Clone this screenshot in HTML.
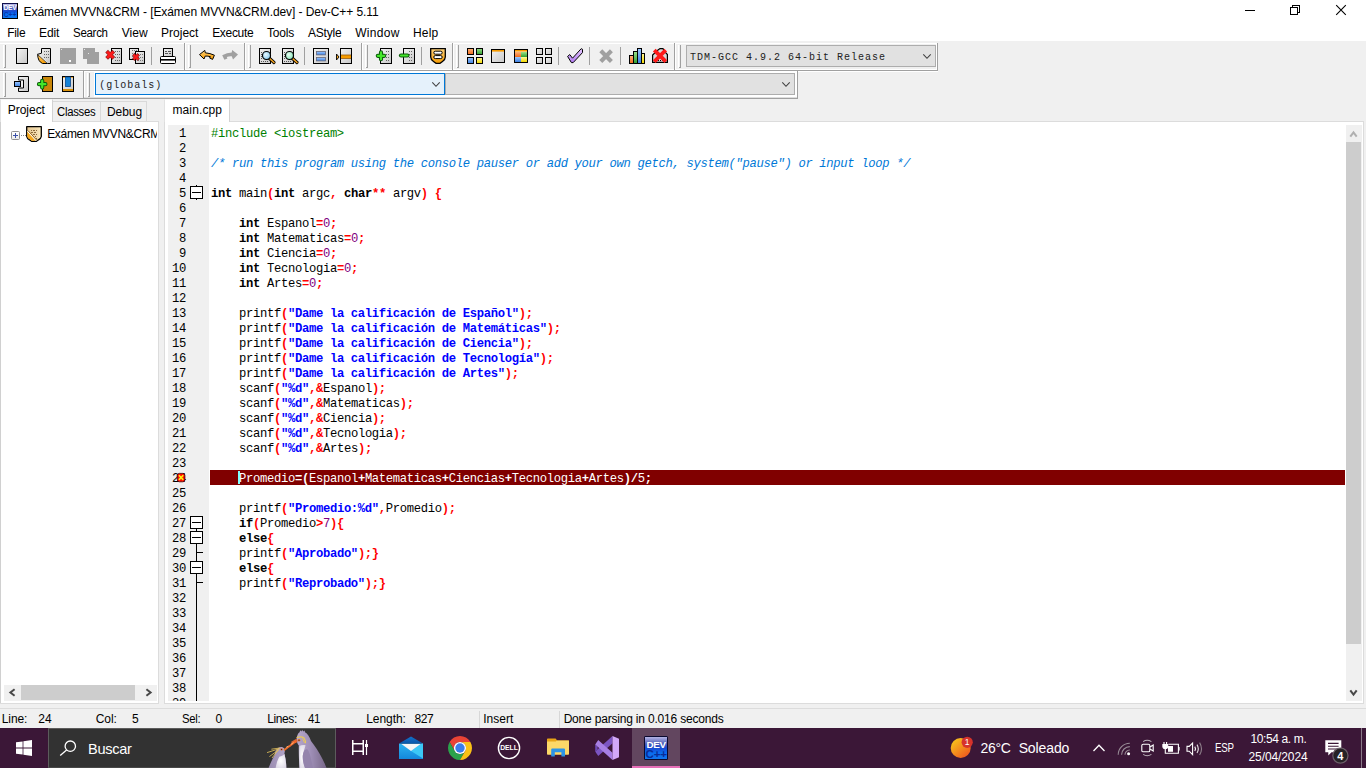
<!DOCTYPE html>
<html lang="es">
<head>
<meta charset="utf-8">
<title>Exámen MVVN&amp;CRM - Dev-C++ 5.11</title>
<style>
*{box-sizing:border-box;margin:0;padding:0}
html,body{width:1366px;height:768px;overflow:hidden;background:#f0f0f0}
body{position:relative;font-family:"Liberation Sans",sans-serif;font-size:12px;color:#000}
.abs{position:absolute}
svg{position:absolute;overflow:visible}
#title{left:0;top:0;width:1366px;height:22px;background:#fff}
#title .t{left:23px;top:3px;font-size:12px;white-space:nowrap}
#menu{left:0;top:22px;width:1366px;height:19px;background:#fff}
#menu span{position:absolute;top:4px;font-size:12px;white-space:nowrap}
#tb1{left:0;top:42px;width:1366px;height:29px}
#tb2{left:0;top:71px;width:1366px;height:28px}
.grip{position:absolute;width:3px;border-left:1px solid #fff;border-right:1px solid #a0a0a0}
.grip:after{content:"";position:absolute;left:0;bottom:0;width:2px;height:1px;background:#a0a0a0}
.vsep{position:absolute;width:1px;background:#a0a0a0}
.vsepl{position:absolute;width:1px;background:#fff}
.combo{position:absolute;background:#e1e1e1;border:1px solid #adadad;font-family:"Liberation Mono",monospace;font-size:10px;letter-spacing:1px;white-space:nowrap;color:#222}
.combo span{position:absolute;left:3px;top:6.4px}
#left{left:0;top:121px;width:159px;height:583px;background:#fff;border-right:1px solid #dcdcdc;border-bottom:1px solid #dcdcdc;overflow:hidden}
.tab{position:absolute;font-size:12px;white-space:nowrap;background:#f0f0f0;border:1px solid #d9d9d9;border-bottom:none}
.tab span{position:absolute}
.tab.sel{background:#fff;border-top-color:#f6f6f6;border-left-color:#e2e2e2;border-right-color:#d2d2d2}
#editor{left:164px;top:121px;width:1200px;height:583px;background:#fff;border:1px solid #dcdcdc;overflow:hidden}
#gutter{left:168px;top:125px;width:41px;height:576px;background:#f0f0f0;overflow:hidden}
.ln{position:absolute;left:0;width:18px;text-align:right;font-family:"Liberation Mono",monospace;font-size:12.2px;letter-spacing:-0.321px;line-height:15px;height:15px;color:#000;padding-top:2px;direction:rtl}
.fold{position:absolute;left:22px;width:13px;height:13px;border:1px solid #000;background:#fff;z-index:2}
.fold:after{content:"";position:absolute;left:1px;top:5px;width:9px;height:1px;background:#000}
.fl{position:absolute;background:#000}
.cl{position:absolute;left:211px;height:15px;line-height:15px;font-family:"Liberation Mono",monospace;font-size:12.2px;letter-spacing:-0.321px;white-space:pre;color:#000;margin-top:2px}
.k{font-weight:bold}
.s{color:#f00;font-weight:bold}
.n{color:#800080}
.q{color:#00f;font-weight:bold}
.p{color:#008000}
.c{color:#0078d7;font-style:italic}
.hl,.hl span{color:#fff !important}
#status{left:0;top:708px;width:1366px;height:20px;background:#f0f0f0;border-top:1px solid #dcdcdc}
#status span{position:absolute;top:3px;font-size:12px;white-space:nowrap}
#task{left:0;top:728px;width:1366px;height:40px;background:#3b1737}
#task .w{color:#fff;position:absolute;white-space:nowrap}

.tx{position:absolute;white-space:pre;line-height:14px}

</style>
</head>
<body>
<svg width="0" height="0" style="left:0;top:0"><defs>
<linearGradient id="gdoc" x1="0" y1="0" x2="1" y2="1"><stop offset="0" stop-color="#f2f2f2"/><stop offset="1" stop-color="#c8c8c8"/></linearGradient>
<linearGradient id="gor" x1="0" y1="0" x2="0" y2="1"><stop offset="0" stop-color="#ffd27a"/><stop offset="1" stop-color="#f59a00"/></linearGradient>
<linearGradient id="gbl" x1="0" y1="0" x2="0" y2="1"><stop offset="0" stop-color="#9cc8ff"/><stop offset="1" stop-color="#3d7fe0"/></linearGradient>
<linearGradient id="ggr" x1="0" y1="0" x2="0" y2="1"><stop offset="0" stop-color="#9be08a"/><stop offset="1" stop-color="#2e9e2e"/></linearGradient>
<linearGradient id="gye" x1="0" y1="0" x2="0" y2="1"><stop offset="0" stop-color="#fff79a"/><stop offset="1" stop-color="#f2d800"/></linearGradient>
<linearGradient id="gre" x1="0" y1="0" x2="0" y2="1"><stop offset="0" stop-color="#ffb27a"/><stop offset="1" stop-color="#f06a1a"/></linearGradient>
<linearGradient id="gpu" x1="0" y1="0" x2="0" y2="1"><stop offset="0" stop-color="#e6c8ff"/><stop offset="1" stop-color="#b07af0"/></linearGradient>
<radialGradient id="glb" cx=".4" cy=".4" r=".7"><stop offset="0" stop-color="#e8f8ff"/><stop offset="1" stop-color="#7cc4ea"/></radialGradient>
<radialGradient id="glg" cx=".4" cy=".4" r=".7"><stop offset="0" stop-color="#e8fff4"/><stop offset="1" stop-color="#7fe0b0"/></radialGradient>
</defs></svg>
<div id="title" class="abs">
<svg style="left:2px;top:3px" width="16" height="16" viewBox="0 0 16 16"><defs><linearGradient id="dvg" x1="0" y1="0" x2="0" y2="1"><stop offset="0" stop-color="#c0c0ec"/><stop offset=".3" stop-color="#5a68c0"/><stop offset=".5" stop-color="#1848d0"/><stop offset=".72" stop-color="#0a70f4"/><stop offset="1" stop-color="#1078f0"/></linearGradient></defs><rect x="0" y="0" width="16" height="16" fill="#000"/><rect x="0" y="0" width="15" height="15" fill="#10104e"/><rect x="1" y="1" width="14" height="14" fill="url(#dvg)"/><text x="8" y="7.4" font-family="Liberation Sans,sans-serif" font-weight="bold" font-size="6.6" fill="#fff" text-anchor="middle" letter-spacing="-0.2">DEV</text><text x="8" y="13.6" font-family="Liberation Sans,sans-serif" font-weight="bold" font-size="6.6" fill="#0a38a8" text-anchor="middle">C++</text></svg>
<span class="tx" style="left:23.54px;top:5px;font-size:12px;letter-spacing:-0.077px;">Exámen MVVN&amp;CRM - [Exámen MVVN&amp;CRM.dev] - Dev-C++ 5.11</span>
<svg style="left:1244px;top:5px" width="12" height="12" viewBox="0 0 12 12"><path d="M1 5.5h10" stroke="#000" stroke-width="1" shape-rendering="crispEdges"/></svg>
<svg style="left:1290px;top:5px" width="10" height="10" viewBox="0 0 10 10" fill="none" stroke="#000" stroke-width="1" shape-rendering="crispEdges"><rect x="0.5" y="2.5" width="7" height="7"/><path d="M2.5 2.5v-2h7v7h-2"/></svg>
<svg style="left:1336px;top:5px" width="10" height="10" viewBox="0 0 10 10"><path d="M0.2 0.2L9.8 9.8M9.8 0.2L0.2 9.8" stroke="#000" stroke-width="1.1"/></svg>
</div>
<div id="menu" class="abs">
<span class="tx" style="left:7.14px;top:4px;font-size:12px;letter-spacing:-0.275px;">File</span>
<span class="tx" style="left:38.94px;top:4px;font-size:12px;letter-spacing:-0.056px;">Edit</span>
<span class="tx" style="left:72.84px;top:4px;font-size:12px;letter-spacing:-0.300px;transform:scaleX(0.9586);transform-origin:0 0;">Search</span>
<span class="tx" style="left:121.74px;top:4px;font-size:12px;letter-spacing:0.008px;">View</span>
<span class="tx" style="left:160.94px;top:4px;font-size:12px;letter-spacing:0.027px;">Project</span>
<span class="tx" style="left:212.14px;top:4px;font-size:12px;letter-spacing:-0.307px;">Execute</span>
<span class="tx" style="left:267.04px;top:4px;font-size:12px;letter-spacing:-0.224px;">Tools</span>
<span class="tx" style="left:308.04px;top:4px;font-size:12px;letter-spacing:-0.213px;">AStyle</span>
<span class="tx" style="left:355.14px;top:4px;font-size:12px;letter-spacing:0.306px;">Window</span>
<span class="tx" style="left:413.04px;top:4px;font-size:12px;letter-spacing:0.144px;">Help</span>
</div>
<div id="tb1" class="abs">
<div class="abs" style="left:0;top:1px;width:938px;height:1px;background:#fff"></div>
<div class="abs" style="left:0;top:28px;width:938px;height:1px;background:#a0a0a0"></div>
<div class="abs" style="left:0;top:27px;width:938px;height:1px;background:#fff"></div>
<div class="grip" style="left:3px;top:3px;height:23px"></div>
<div class="grip" style="left:188px;top:3px;height:23px"></div>
<div class="grip" style="left:248px;top:3px;height:23px"></div>
<div class="grip" style="left:365px;top:3px;height:23px"></div>
<div class="grip" style="left:456px;top:3px;height:23px"></div>
<div class="grip" style="left:678px;top:3px;height:23px"></div>
<div class="vsep" style="left:184px;top:1px;height:27px"></div><div class="vsepl" style="left:185px;top:1px;height:27px"></div>
<div class="vsep" style="left:244px;top:1px;height:27px"></div><div class="vsepl" style="left:245px;top:1px;height:27px"></div>
<div class="vsep" style="left:361px;top:1px;height:27px"></div><div class="vsepl" style="left:362px;top:1px;height:27px"></div>
<div class="vsep" style="left:452px;top:1px;height:27px"></div><div class="vsepl" style="left:453px;top:1px;height:27px"></div>
<div class="vsep" style="left:674px;top:1px;height:27px"></div><div class="vsepl" style="left:675px;top:1px;height:27px"></div>
<div class="vsep" style="left:937px;top:1px;height:28px"></div><div class="vsepl" style="left:936px;top:1px;height:27px"></div>
<div class="vsep" style="left:151px;top:5px;height:18px"></div>
<div class="vsep" style="left:304px;top:5px;height:18px"></div>
<div class="vsep" style="left:421px;top:5px;height:18px"></div>
<div class="vsep" style="left:558px;top:5px;height:18px"></div>
<div class="vsep" style="left:589px;top:5px;height:18px"></div>
<div class="vsep" style="left:620px;top:5px;height:18px"></div>
<svg class="ic" style="left:16px;top:6px" width="16" height="16" viewBox="0 0 16 16" ><rect x="0.5" y="0.5" width="11" height="15" fill="url(#gdoc)" stroke="#000"/></svg>
<svg class="ic" style="left:37px;top:6px" width="16" height="16" viewBox="0 0 16 16" ><path d="M4.5 0.5H13.5V15.5H10.5L1 6.2L4.5 5.2Z" fill="url(#gdoc)" stroke="#000"/><rect x="7" y="3" width="1" height="1" fill="#666"/><rect x="7" y="6" width="1" height="1" fill="#666"/><rect x="7" y="9" width="1" height="1" fill="#666"/><rect x="9" y="3" width="1" height="1" fill="#666"/><rect x="9" y="6" width="1" height="1" fill="#666"/><rect x="9" y="9" width="1" height="1" fill="#666"/><rect x="11" y="3" width="1" height="1" fill="#666"/><rect x="11" y="6" width="1" height="1" fill="#666"/><rect x="11" y="9" width="1" height="1" fill="#666"/><path d="M0.6 6.2 L10.6 15.5 L5.6 15.5 Q0.8 13.6 0.6 6.2Z" fill="url(#gor)" stroke="#000" stroke-width="1" stroke-linejoin="round"/><path d="M1.6 6.6 L10.4 14.8" stroke="#fff" stroke-width=".8"/></svg>
<svg class="ic" style="left:60px;top:6px" width="16" height="16" viewBox="0 0 16 16" ><rect x="0" y="0" width="16" height="16" fill="#a0a0a0"/><rect x="1" y="1" width="1" height="1" fill="#e8e8e8"/><rect x="9" y="12" width="2" height="2" fill="#fff"/></svg>
<svg class="ic" style="left:83px;top:6px" width="16" height="16" viewBox="0 0 16 16" ><rect x="0" y="0" width="12" height="11" fill="#a0a0a0"/><rect x="4" y="4" width="12" height="12" fill="#a0a0a0"/><rect x="1" y="1" width="1" height="1" fill="#e8e8e8"/><rect x="5" y="5" width="1" height="1" fill="#e8e8e8"/></svg>
<svg class="ic" style="left:106px;top:6px" width="16" height="16" viewBox="0 0 16 16" ><rect x="5.5" y="0.5" width="10" height="15" fill="url(#gdoc)" stroke="#000"/><rect x="9" y="3" width="1" height="1" fill="#666"/><rect x="9" y="6" width="1" height="1" fill="#666"/><rect x="9" y="9" width="1" height="1" fill="#666"/><rect x="9" y="12" width="1" height="1" fill="#666"/><rect x="11" y="3" width="1" height="1" fill="#666"/><rect x="11" y="6" width="1" height="1" fill="#666"/><rect x="11" y="9" width="1" height="1" fill="#666"/><rect x="11" y="12" width="1" height="1" fill="#666"/><rect x="13" y="3" width="1" height="1" fill="#666"/><rect x="13" y="6" width="1" height="1" fill="#666"/><rect x="13" y="9" width="1" height="1" fill="#666"/><rect x="13" y="12" width="1" height="1" fill="#666"/><path d="M2.0 4.6L6.4 9.0M6.4 4.6L2.0 9.0" stroke="#8a0000" stroke-width="3.9000000000000004" stroke-linecap="square" fill="none" opacity=".85"/><path d="M2.0 4.6L6.4 9.0M6.4 4.6L2.0 9.0" stroke="#ff1a1a" stroke-width="2.6" stroke-linecap="square" fill="none"/></svg>
<svg class="ic" style="left:129px;top:6px" width="16" height="16" viewBox="0 0 16 16" ><rect x="0.5" y="0.5" width="9" height="11" fill="url(#gdoc)" stroke="#000"/><rect x="3" y="2" width="1" height="1" fill="#777"/><rect x="3" y="5" width="1" height="1" fill="#777"/><rect x="3" y="8" width="1" height="1" fill="#777"/><rect x="5" y="2" width="1" height="1" fill="#777"/><rect x="5" y="5" width="1" height="1" fill="#777"/><rect x="5" y="8" width="1" height="1" fill="#777"/><rect x="7" y="2" width="1" height="1" fill="#777"/><rect x="7" y="5" width="1" height="1" fill="#777"/><rect x="7" y="8" width="1" height="1" fill="#777"/><rect x="6.5" y="3.5" width="9" height="12" fill="url(#gdoc)" stroke="#000"/><rect x="9" y="6" width="1" height="1" fill="#777"/><rect x="9" y="9" width="1" height="1" fill="#777"/><rect x="9" y="12" width="1" height="1" fill="#777"/><rect x="11" y="6" width="1" height="1" fill="#777"/><rect x="11" y="9" width="1" height="1" fill="#777"/><rect x="11" y="12" width="1" height="1" fill="#777"/><rect x="13" y="6" width="1" height="1" fill="#777"/><rect x="13" y="9" width="1" height="1" fill="#777"/><rect x="13" y="12" width="1" height="1" fill="#777"/><path d="M5.4 7.4L8.6 10.6M8.6 7.4L5.4 10.6" stroke="#8a0000" stroke-width="3.3" stroke-linecap="square" fill="none" opacity=".85"/><path d="M5.4 7.4L8.6 10.6M8.6 7.4L5.4 10.6" stroke="#ff1a1a" stroke-width="2.0" stroke-linecap="square" fill="none"/></svg>
<svg class="ic" style="left:160px;top:6px" width="16" height="16" viewBox="0 0 16 16" ><rect x="3.5" y="0.5" width="9" height="8" fill="url(#gdoc)" stroke="#000"/><rect x="5" y="3" width="2" height="1" fill="#555"/><rect x="8" y="3" width="3" height="1" fill="#555"/><rect x="5" y="5" width="3" height="1" fill="#555"/><rect x="9" y="5" width="2" height="1" fill="#555"/><rect x="0.5" y="8.5" width="15" height="7" rx="1" fill="#fff" stroke="#000"/><rect x="1" y="11" width="14" height="1.6" fill="#000"/></svg>
<svg class="ic" style="left:199px;top:8px" width="16" height="16" viewBox="0 0 16 16" ><path d="M0.5 4.6 L5.8 0.4 L6.3 2.8 Q11 3.2 15.4 5.2 L13.6 9.4 L10.6 8 L11.4 6.7 Q9 5.9 6.2 6.1 L5 9 Z" fill="url(#gor)" stroke="#000" stroke-width="1" stroke-linejoin="round"/></svg>
<svg class="ic" style="left:222px;top:8px" width="16" height="16" viewBox="0 0 16 16" ><path d="M16 4.6 L10.2 0 L9.7 2.6 Q5 3 0.2 5.2 L2.4 9.8 L5.4 8.4 L4.8 7 Q7 6.1 9.8 6.3 L11 9.6 Z" fill="#a0a0a0"/></svg>
<svg class="ic" style="left:259px;top:6px" width="16" height="16" viewBox="0 0 16 16" ><rect x="0.5" y="0.5" width="11" height="15" fill="url(#gdoc)" stroke="#000"/><rect x="2" y="13" width="1" height="1" fill="#555"/><rect x="4" y="13" width="1" height="1" fill="#555"/><rect x="6" y="13" width="1" height="1" fill="#555"/><rect x="8" y="13" width="1" height="1" fill="#555"/><rect x="2" y="4" width="1" height="1" fill="#555"/><rect x="2" y="6" width="1" height="1" fill="#555"/><rect x="2" y="8" width="1" height="1" fill="#555"/><rect x="2" y="10" width="1" height="1" fill="#555"/><path d="M10 10 L15 14.5" stroke="#000" stroke-width="3.2" stroke-linecap="round"/><path d="M10 10 L15 14.5" stroke="#f5a623" stroke-width="1.6" stroke-linecap="round"/><circle cx="7.5" cy="7.5" r="4" fill="url(#glb)" stroke="#000" stroke-width="1.2"/></svg>
<svg class="ic" style="left:282px;top:6px" width="16" height="16" viewBox="0 0 16 16" ><rect x="0.5" y="0.5" width="11" height="15" fill="url(#gdoc)" stroke="#000"/><rect x="2" y="13" width="1" height="1" fill="#555"/><rect x="4" y="13" width="1" height="1" fill="#555"/><rect x="6" y="13" width="1" height="1" fill="#555"/><rect x="8" y="13" width="1" height="1" fill="#555"/><rect x="2" y="4" width="1" height="1" fill="#555"/><rect x="2" y="6" width="1" height="1" fill="#555"/><rect x="2" y="8" width="1" height="1" fill="#555"/><rect x="2" y="10" width="1" height="1" fill="#555"/><path d="M10 10 L15 14.5" stroke="#000" stroke-width="3.2" stroke-linecap="round"/><path d="M10 10 L15 14.5" stroke="#f5a623" stroke-width="1.6" stroke-linecap="round"/><circle cx="7.5" cy="7.5" r="4" fill="url(#glg)" stroke="#000" stroke-width="1.2"/></svg>
<svg class="ic" style="left:313px;top:6px" width="16" height="16" viewBox="0 0 16 16" ><rect x="0.5" y="0.5" width="15" height="15" fill="url(#gdoc)" stroke="#000"/><rect x="3.5" y="3.5" width="9" height="3.4" fill="url(#gbl)" stroke="#667" stroke-width=".8"/><rect x="3.5" y="9.5" width="9" height="3.4" fill="url(#gbl)" stroke="#667" stroke-width=".8"/></svg>
<svg class="ic" style="left:336px;top:6px" width="16" height="16" viewBox="0 0 16 16" ><rect x="4.5" y="0.5" width="11" height="15" fill="url(#gdoc)" stroke="#000"/><rect x="5" y="7" width="10" height="3.2" fill="#f59a00"/><rect x="5" y="6.6" width="10" height=".8" fill="#9a5a00"/><rect x="5" y="10" width="10" height=".8" fill="#9a5a00"/><path d="M0.5 6 L3 9 L0.5 12Z" fill="#f5a623" stroke="#000" stroke-width=".9"/></svg>
<svg class="ic" style="left:376px;top:6px" width="16" height="16" viewBox="0 0 16 16" ><rect x="4.5" y="0.5" width="11" height="15" fill="url(#gdoc)" stroke="#000"/><rect x="10" y="3" width="1" height="1" fill="#666"/><rect x="10" y="6" width="1" height="1" fill="#666"/><rect x="10" y="9" width="1" height="1" fill="#666"/><rect x="10" y="12" width="1" height="1" fill="#666"/><rect x="12" y="3" width="1" height="1" fill="#666"/><rect x="12" y="6" width="1" height="1" fill="#666"/><rect x="12" y="9" width="1" height="1" fill="#666"/><rect x="12" y="12" width="1" height="1" fill="#666"/><path d="M5 4.4v6.8M1.8 7.8h6.4" stroke="#0a5a0a" stroke-width="4.2" stroke-linecap="round"/><path d="M5 4.4v6.8M1.8 7.8h6.4" stroke="#44e62a" stroke-width="2.2" stroke-linecap="round"/></svg>
<svg class="ic" style="left:399px;top:6px" width="16" height="16" viewBox="0 0 16 16" ><rect x="4.5" y="0.5" width="11" height="15" fill="url(#gdoc)" stroke="#000"/><rect x="10" y="3" width="1" height="1" fill="#666"/><rect x="10" y="6" width="1" height="1" fill="#666"/><rect x="10" y="9" width="1" height="1" fill="#666"/><rect x="10" y="12" width="1" height="1" fill="#666"/><rect x="12" y="3" width="1" height="1" fill="#666"/><rect x="12" y="6" width="1" height="1" fill="#666"/><rect x="12" y="9" width="1" height="1" fill="#666"/><rect x="12" y="12" width="1" height="1" fill="#666"/><path d="M2 7.5h6.4" stroke="#0a5a0a" stroke-width="4.2" stroke-linecap="round"/><path d="M2 7.5h6.4" stroke="#44e62a" stroke-width="2.2" stroke-linecap="round"/></svg>
<svg class="ic" style="left:430px;top:6px" width="16" height="16" viewBox="0 0 16 16" ><path d="M0.7 0.7 H15.3 V9 Q15.3 11.5 12.5 13.5 L10 15.3 H6 L3.5 13.5 Q0.7 11.5 0.7 9Z" fill="url(#gor)" stroke="#000" stroke-width="1.3"/><rect x="3.8" y="3.2" width="8.4" height="3" rx="1.5" fill="#fff" stroke="#000" stroke-width="1"/><rect x="3.8" y="7.6" width="8.4" height="3" rx="1.5" fill="#fff" stroke="#000" stroke-width="1"/></svg>
<svg class="ic" style="left:467px;top:6px" width="16" height="16" viewBox="0 0 16 16" ><rect x="0.5" y="0.5" width="6" height="6" fill="url(#gre)" stroke="#000"/><rect x="9.5" y="0.5" width="6" height="6" fill="url(#ggr)" stroke="#000"/><rect x="0.5" y="9.5" width="6" height="6" fill="url(#gbl)" stroke="#000"/><rect x="9.5" y="9.5" width="6" height="6" fill="url(#gye)" stroke="#000"/></svg>
<svg class="ic" style="left:491px;top:6px" width="16" height="16" viewBox="0 0 16 16" ><rect x="0.5" y="1.5" width="13" height="13" fill="url(#gdoc)" stroke="#000"/><rect x="1" y="2" width="12" height="1.6" fill="#f59a00"/></svg>
<svg class="ic" style="left:514px;top:6px" width="16" height="16" viewBox="0 0 16 16" ><rect x="0.5" y="1.5" width="13" height="13" fill="#fff" stroke="#000"/><rect x="1" y="2" width="12" height="1.6" fill="#f59a00"/><rect x="1" y="4" width="6" height="5" fill="url(#gre)"/><rect x="7" y="4" width="6" height="5" fill="url(#ggr)"/><rect x="1" y="9" width="6" height="5" fill="url(#gbl)"/><rect x="7" y="9" width="6" height="5" fill="url(#gye)"/></svg>
<svg class="ic" style="left:536px;top:6px" width="16" height="16" viewBox="0 0 16 16" ><rect x="0.5" y="0.5" width="6" height="6" fill="url(#gdoc)" stroke="#000"/><rect x="9.5" y="0.5" width="6" height="6" fill="url(#gdoc)" stroke="#000"/><rect x="0.5" y="9.5" width="6" height="6" fill="url(#gdoc)" stroke="#000"/><rect x="9.5" y="9.5" width="6" height="6" fill="url(#gdoc)" stroke="#000"/></svg>
<svg class="ic" style="left:567px;top:6px" width="16" height="16" viewBox="0 0 16 16" ><path d="M0.6 8.4 L2.8 6.6 L5.5 10.2 L14.2 0.7 L15.5 1.3 L15.5 4.6 L6.2 14.6 L4.4 14.6Z" fill="url(#gpu)" stroke="#000" stroke-width="1" stroke-linejoin="round"/></svg>
<svg class="ic" style="left:599px;top:6px" width="16" height="16" viewBox="0 0 16 16" ><path d="M1.8 2.8 L12.4 13.4 M12.4 2.8 L1.8 13.4" stroke="#a0a0a0" stroke-width="4.2" stroke-linecap="butt"/></svg>
<svg class="ic" style="left:629px;top:6px" width="16" height="16" viewBox="0 0 16 16" ><rect x="0.5" y="7.5" width="4" height="8" fill="url(#gre)" stroke="#000"/><rect x="4.5" y="3.5" width="4" height="12" fill="url(#ggr)" stroke="#000"/><rect x="8.5" y="0.5" width="4" height="15" fill="url(#gbl)" stroke="#000"/><rect x="12.5" y="5.5" width="3" height="10" fill="url(#gye)" stroke="#000"/></svg>
<svg class="ic" style="left:652px;top:6px" width="16" height="16" viewBox="0 0 16 16" ><path d="M0.6 14.4 V7 L6 2 L8 0.6 H11 L12 3 L15.4 6.5 V14.4Z" fill="#d8d8d8" stroke="#000" stroke-width="1.2"/><rect x="2" y="12" width="1" height="1" fill="#000"/><rect x="4" y="12" width="1" height="1" fill="#000"/><rect x="6" y="12" width="1" height="1" fill="#000"/><rect x="8" y="12" width="1" height="1" fill="#000"/><rect x="10" y="12" width="1" height="1" fill="#000"/><rect x="12" y="12" width="1" height="1" fill="#000"/><path d="M3.5999999999999996 3.3999999999999995L12.4 12.2M12.4 3.3999999999999995L3.5999999999999996 12.2" stroke="#ff1a1a" stroke-width="3.8" stroke-linecap="square" fill="none"/></svg>
<div class="combo" style="left:686px;top:3px;width:250px;height:22px"><span>TDM-GCC 4.9.2 64-bit Release</span><svg style="left:236px;top:8px" width="8" height="5" viewBox="0 0 8 5"><path d="M0.3 0.4L4 4.3L7.7 0.4" fill="none" stroke="#404040" stroke-width="1.1"/></svg></div>
</div>
<div id="tb2" class="abs">
<div class="abs" style="left:0;top:27px;width:798px;height:1px;background:#a0a0a0"></div>
<div class="abs" style="left:84px;top:26px;width:713px;height:1px;background:#dedede;z-index:2"></div>
<div class="abs" style="left:0;top:0;width:938px;height:1px;background:#fff"></div>
<div class="abs" style="left:94px;top:0;width:703px;height:27px;background:#fff"></div>
<div class="grip" style="left:3px;top:2px;height:24px"></div>
<div class="grip" style="left:87px;top:2px;height:24px"></div>
<div class="vsep" style="left:83px;top:0px;height:27px"></div><div class="vsepl" style="left:84px;top:0px;height:27px"></div>
<div class="vsep" style="left:797px;top:0;height:28px"></div>
<svg class="ic" style="left:14px;top:5px" width="16" height="16" viewBox="0 0 16 16" ><path d="M4.5 0.5 H14.5 V15.5 H4.5 V12 H9.5 V4 H4.5Z" fill="url(#gdoc)" stroke="#000"/><rect x="0.5" y="5.5" width="6" height="5" fill="url(#gbl)" stroke="#000"/></svg>
<svg class="ic" style="left:37px;top:5px" width="16" height="16" viewBox="0 0 16 16" ><rect x="5.5" y="0.5" width="10" height="15" fill="#c8860a" stroke="#000"/><path d="M5.2 4.8v6.8M2 8.2h6.4" stroke="#0a5a0a" stroke-width="4.2" stroke-linecap="round"/><path d="M5.2 4.8v6.8M2 8.2h6.4" stroke="#44e62a" stroke-width="2.2" stroke-linecap="round"/></svg>
<svg class="ic" style="left:62px;top:5px" width="16" height="16" viewBox="0 0 16 16" ><rect x="0.5" y="0.5" width="11" height="15" fill="url(#gdoc)" stroke="#000"/><rect x="1" y="13" width="10" height="2" fill="#d8900a"/><rect x="1" y="1" width="10" height="1" fill="#f5b040"/><rect x="3.5" y="1" width="5" height="9.5" fill="#1583d8" stroke="#0a4a90" stroke-width=".8"/></svg>
<div class="combo" style="left:95px;top:2px;width:350px;height:22px;background:#e5f1fb;border-color:#0078d7"><span style="left:3.3px">(globals)</span><svg style="left:336px;top:8px" width="8" height="5" viewBox="0 0 8 5"><path d="M0.3 0.4L4 4.3L7.7 0.4" fill="none" stroke="#404040" stroke-width="1.1"/></svg></div>
<div class="combo" style="left:445px;top:2px;width:350px;height:22px"><svg style="left:336px;top:8px" width="8" height="5" viewBox="0 0 8 5"><path d="M0.3 0.4L4 4.3L7.7 0.4" fill="none" stroke="#404040" stroke-width="1.1"/></svg></div>
</div>
<div class="tab sel" style="left:0;top:99px;width:53px;height:23px;z-index:3"></div>
<div class="tab" style="left:52px;top:101px;width:49px;height:20px"></div>
<div class="tab" style="left:100px;top:101px;width:47px;height:20px"></div>
<div class="abs" style="z-index:4;left:0;top:0"><span class="tx" style="left:7.74px;top:103px;font-size:12px;letter-spacing:-0.023px;">Project</span><span class="tx" style="left:56.94px;top:104.5px;font-size:12px;letter-spacing:-0.300px;transform:scaleX(0.9445);transform-origin:0 0;">Classes</span><span class="tx" style="left:106.94px;top:104.5px;font-size:12px;letter-spacing:-0.039px;">Debug</span><span class="tx" style="left:172.44px;top:103px;font-size:12px;letter-spacing:0.131px;">main.cpp</span></div>
<div id="left" class="abs">
<div class="abs" style="left:53px;top:0;width:106px;height:1px;background:#dcdcdc"></div>
<div class="abs" style="left:0;top:0;width:1px;height:583px;background:#d0d0d0"></div>
<div class="abs" style="left:11px;top:10px;width:9px;height:9px;border:1px solid #919191;border-radius:1.5px;background:linear-gradient(#fff,#ececec)"></div>
<div class="abs" style="left:13px;top:14px;width:5px;height:1px;background:#3a50a8"></div><div class="abs" style="left:15px;top:12px;width:1px;height:5px;background:#3a50a8"></div>
<div class="abs" style="left:21px;top:14px;width:1px;height:1px;background:#888"></div><div class="abs" style="left:23px;top:14px;width:1px;height:1px;background:#888"></div><div class="abs" style="left:25px;top:14px;width:1px;height:1px;background:#888"></div>
<svg style="left:26px;top:5px" width="16" height="16" viewBox="0 0 16 16"><defs><linearGradient id="trg" x1="0" y1="0" x2="1" y2="0"><stop offset="0" stop-color="#e8c890"/><stop offset=".75" stop-color="#f2dcb0"/><stop offset="1" stop-color="#fff0c0"/></linearGradient></defs><path d="M0.7 0.7 H15.3 V10.5 Q15 12.5 12.5 13.8 L10.5 15.3 H5.5 L3.5 13.8 Q1 12.5 0.7 10.5Z" fill="url(#trg)" stroke="#000" stroke-width="1.3" stroke-linejoin="round"/><path d="M1.3 5.6 L9.6 14.7 H5.7 L3.8 13.3 Q1.6 12.2 1.3 10.4Z" fill="#f7a81c"/><path d="M1.3 5.2 L10.2 14.8" stroke="#fff" stroke-width="1"/><path d="M2 4.6 L11 14.4" stroke="#8a5a10" stroke-width=".9"/><rect x="5" y="4" width="1" height="1" fill="#8a6a3a"/><rect x="7" y="4" width="2" height="1" fill="#8a6a3a"/><rect x="10" y="4" width="1" height="1" fill="#8a6a3a"/><rect x="5" y="6" width="2" height="1" fill="#8a6a3a"/><rect x="8" y="6" width="2" height="1" fill="#8a6a3a"/><rect x="7" y="8" width="2" height="1" fill="#8a6a3a"/><rect x="10" y="8" width="1" height="1" fill="#8a6a3a"/><rect x="9" y="10" width="1" height="1" fill="#8a6a3a"/><rect x="10" y="12" width="1" height="1" fill="#8a6a3a"/></svg>
<span class="tx" style="left:47.14px;top:6px;font-size:12px;letter-spacing:-0.303px;">Exámen MVVN&amp;CRM</span>
<div class="abs" style="left:157px;top:1px;width:1px;height:560px;background:#fff"></div>
<div class="abs" style="left:4px;top:564px;width:153px;height:16px;background:#f0f0f0"></div>
<div class="abs" style="left:21px;top:564px;width:114px;height:15px;background:#cdcdcd"></div>
<svg style="left:9px;top:568px" width="6" height="7" viewBox="0 0 6 7"><path d="M5.6 0.3L1.4 3.5L5.6 6.7" fill="none" stroke="#484848" stroke-width="2"/></svg>
<svg style="left:146px;top:568px" width="6" height="7" viewBox="0 0 6 7"><path d="M0.4 0.3L4.6 3.5L0.4 6.7" fill="none" stroke="#484848" stroke-width="2"/></svg>
</div>
<div class="tab sel" style="left:164px;top:99px;width:66px;height:23px;z-index:3"></div>
<div id="editor" class="abs"></div>
<div id="gutter" class="abs">
<div class="ln" style="top:0px">1</div>
<div class="ln" style="top:15px">2</div>
<div class="ln" style="top:30px">3</div>
<div class="ln" style="top:45px">4</div>
<div class="ln" style="top:60px">5</div>
<div class="ln" style="top:75px">6</div>
<div class="ln" style="top:90px">7</div>
<div class="ln" style="top:105px">8</div>
<div class="ln" style="top:120px">9</div>
<div class="ln" style="top:135px">10</div>
<div class="ln" style="top:150px">11</div>
<div class="ln" style="top:165px">12</div>
<div class="ln" style="top:180px">13</div>
<div class="ln" style="top:195px">14</div>
<div class="ln" style="top:210px">15</div>
<div class="ln" style="top:225px">16</div>
<div class="ln" style="top:240px">17</div>
<div class="ln" style="top:255px">18</div>
<div class="ln" style="top:270px">19</div>
<div class="ln" style="top:285px">20</div>
<div class="ln" style="top:300px">21</div>
<div class="ln" style="top:315px">22</div>
<div class="ln" style="top:330px">23</div>
<div class="ln" style="top:345px">24</div>
<svg style="left:9px;top:348px" width="8" height="9" viewBox="0 0 8 9"><rect x="0.3" y="0.4" width="7.6" height="8.4" rx="2" fill="#ff0a00" stroke="#400" stroke-width=".8"/><path d="M1.9 2.3L6.3 6.9M6.3 2.3L1.9 6.9" stroke="#ffee10" stroke-width="1.6"/></svg>
<div class="ln" style="top:360px">25</div>
<div class="ln" style="top:375px">26</div>
<div class="ln" style="top:390px">27</div>
<div class="ln" style="top:405px">28</div>
<div class="ln" style="top:420px">29</div>
<div class="ln" style="top:435px">30</div>
<div class="ln" style="top:450px">31</div>
<div class="ln" style="top:465px">32</div>
<div class="ln" style="top:480px">33</div>
<div class="ln" style="top:495px">34</div>
<div class="ln" style="top:510px">35</div>
<div class="ln" style="top:525px">36</div>
<div class="ln" style="top:540px">37</div>
<div class="ln" style="top:555px">38</div>
<div class="ln" style="top:570px">39</div>
<div class="fold" style="top:61px"></div>
<div class="fold" style="top:391px"></div>
<div class="fold" style="top:406px"></div>
<div class="fold" style="top:436px"></div>
<div class="fl" style="left:28px;top:60px;width:1px;height:15px"></div>
<div class="fl" style="left:28px;top:401px;width:1px;height:180px"></div>
<div class="fl" style="left:28px;top:427px;width:7px;height:1px"></div>
<div class="fl" style="left:28px;top:457px;width:7px;height:1px"></div>
</div>
<div class="abs" style="left:210px;top:470px;width:1135px;height:15px;background:#800000"></div>
<div class="abs" style="left:238px;top:471px;width:2px;height:13px;background:#80ffff"></div>
<div class="cl p" style="top:125px">#include &lt;iostream&gt;</div>
<div class="cl c" style="top:155px">/* run this program using the console pauser or add your own getch, system("pause") or input loop */</div>
<div class="cl" style="top:185px"><span class="k">int</span> main<span class="s">(</span><span class="k">int</span> argc<span class="s">,</span> <span class="k">char</span><span class="s">**</span> argv<span class="s">)</span> <span class="s">{</span></div>
<div class="cl" style="top:215px">    <span class="k">int</span> Espanol<span class="s">=</span><span class="n">0</span><span class="s">;</span></div>
<div class="cl" style="top:230px">    <span class="k">int</span> Matematicas<span class="s">=</span><span class="n">0</span><span class="s">;</span></div>
<div class="cl" style="top:245px">    <span class="k">int</span> Ciencia<span class="s">=</span><span class="n">0</span><span class="s">;</span></div>
<div class="cl" style="top:260px">    <span class="k">int</span> Tecnologia<span class="s">=</span><span class="n">0</span><span class="s">;</span></div>
<div class="cl" style="top:275px">    <span class="k">int</span> Artes<span class="s">=</span><span class="n">0</span><span class="s">;</span></div>
<div class="cl" style="top:305px">    printf<span class="s">(</span><span class="q">"Dame la calificación de Español"</span><span class="s">);</span></div>
<div class="cl" style="top:320px">    printf<span class="s">(</span><span class="q">"Dame la calificación de Matemáticas"</span><span class="s">);</span></div>
<div class="cl" style="top:335px">    printf<span class="s">(</span><span class="q">"Dame la calificación de Ciencia"</span><span class="s">);</span></div>
<div class="cl" style="top:350px">    printf<span class="s">(</span><span class="q">"Dame la calificación de Tecnología"</span><span class="s">);</span></div>
<div class="cl" style="top:365px">    printf<span class="s">(</span><span class="q">"Dame la calificación de Artes"</span><span class="s">);</span></div>
<div class="cl" style="top:380px">    scanf<span class="s">(</span><span class="q">"%d"</span><span class="s">,&amp;</span>Espanol<span class="s">);</span></div>
<div class="cl" style="top:395px">    scanf<span class="s">(</span><span class="q">"%d"</span><span class="s">,&amp;</span>Matematicas<span class="s">);</span></div>
<div class="cl" style="top:410px">    scanf<span class="s">(</span><span class="q">"%d"</span><span class="s">,&amp;</span>Ciencia<span class="s">);</span></div>
<div class="cl" style="top:425px">    scanf<span class="s">(</span><span class="q">"%d"</span><span class="s">,&amp;</span>Tecnologia<span class="s">);</span></div>
<div class="cl" style="top:440px">    scanf<span class="s">(</span><span class="q">"%d"</span><span class="s">,&amp;</span>Artes<span class="s">);</span></div>
<div class="cl hl" style="top:470px">    Promedio<span class="s">=(</span>Espanol<span class="s">+</span>Matematicas<span class="s">+</span>Ciencias<span class="s">+</span>Tecnologia<span class="s">+</span>Artes<span class="s">)/</span><span class="n">5</span><span class="s">;</span></div>
<div class="cl" style="top:500px">    printf<span class="s">(</span><span class="q">"Promedio:%d"</span><span class="s">,</span>Promedio<span class="s">);</span></div>
<div class="cl" style="top:515px">    <span class="k">if</span><span class="s">(</span>Promedio<span class="s">&gt;</span><span class="n">7</span><span class="s">){</span></div>
<div class="cl" style="top:530px">    <span class="k">else</span><span class="s">{</span></div>
<div class="cl" style="top:545px">    printf<span class="s">(</span><span class="q">"Aprobado"</span><span class="s">);}</span></div>
<div class="cl" style="top:560px">    <span class="k">else</span><span class="s">{</span></div>
<div class="cl" style="top:575px">    printf<span class="s">(</span><span class="q">"Reprobado"</span><span class="s">);}</span></div>
<div class="abs" style="left:1346px;top:125px;width:16px;height:576px;background:#f0f0f0"></div>
<div class="abs" style="left:1346px;top:142px;width:15px;height:502px;background:#cdcdcd"></div>
<svg style="left:1350px;top:131px" width="7" height="6" viewBox="0 0 7 6"><path d="M0.3 5.7L3.5 1.4L6.7 5.7" fill="none" stroke="#b0b0b0" stroke-width="2"/></svg>
<svg style="left:1350px;top:690px" width="7" height="6" viewBox="0 0 7 6"><path d="M0.3 0.3L3.5 4.6L6.7 0.3" fill="none" stroke="#484848" stroke-width="2"/></svg>
<div id="status" class="abs">
<span class="tx" style="left:1.84px;top:3px;font-size:12px;letter-spacing:-0.128px;">Line:</span>
<span class="tx" style="left:38.34px;top:3px;font-size:12px;letter-spacing:-0.039px;">24</span>
<span class="tx" style="left:95.64px;top:3px;font-size:12px;letter-spacing:-0.008px;">Col:</span>
<span class="tx" style="left:132.04px;top:3px;font-size:12px;letter-spacing:-0.067px;">5</span>
<span class="tx" style="left:182.44px;top:3px;font-size:12px;letter-spacing:-0.300px;transform:scaleX(0.9410);transform-origin:0 0;">Sel:</span>
<span class="tx" style="left:215.54px;top:3px;font-size:12px;letter-spacing:0.233px;">0</span>
<span class="tx" style="left:267.14px;top:3px;font-size:12px;letter-spacing:-0.382px;">Lines:</span>
<span class="tx" style="left:308.24px;top:3px;font-size:12px;letter-spacing:-0.300px;transform:scaleX(0.9510);transform-origin:0 0;">41</span>
<span class="tx" style="left:366.24px;top:3px;font-size:12px;letter-spacing:-0.071px;">Length:</span>
<span class="tx" style="left:414.54px;top:3px;font-size:12px;letter-spacing:-0.456px;">827</span>
<span class="tx" style="left:483.24px;top:3px;font-size:12px;letter-spacing:0.001px;">Insert</span>
<span class="tx" style="left:563.64px;top:3px;font-size:12px;letter-spacing:-0.190px;">Done parsing in 0.016 seconds</span>
<div class="abs" style="left:479px;top:2px;width:1px;height:17px;background:#d7d7d7"></div><div class="abs" style="left:559px;top:2px;width:1px;height:17px;background:#d7d7d7"></div>
</div>
<div id="task" class="abs">
<svg style="left:16px;top:12px" width="16" height="16" viewBox="0 0 16 16" fill="#fff"><path d="M0 2.3L6.6 1.4V7.6H0Z"/><path d="M7.4 1.3L16 0V7.6H7.4Z"/><path d="M0 8.4H6.6V14.6L0 13.7Z"/><path d="M7.4 8.4H16V16L7.4 14.7Z"/></svg>
<div class="abs" style="left:48px;top:0;width:288px;height:40px;background:#323232;border:1px solid #5c5c5c;border-bottom-color:#484848"></div>
<svg style="left:58px;top:10px" width="20" height="20" viewBox="0 0 20 20" fill="none" stroke="#fff" stroke-width="1.3"><circle cx="12.3" cy="8.2" r="5.2"/><path d="M8.6 12L2.2 17.6"/></svg>
<span class="tx" style="left:87.97px;top:13.6px;font-size:15px;letter-spacing:-0.300px;transform:scaleX(0.9704);transform-origin:0 0;color:#fff;">Buscar</span>
<svg style="left:256px;top:0px" width="80" height="40" viewBox="0 0 80 40">
<defs><linearGradient id="pg1" x1="0" y1="0" x2="1" y2="0"><stop offset="0" stop-color="#b6a8cc"/><stop offset=".45" stop-color="#a090b8"/><stop offset="1" stop-color="#786888"/></linearGradient>
<linearGradient id="pg2" x1="0" y1="0" x2="1" y2="0"><stop offset="0" stop-color="#9a8cb0"/><stop offset="1" stop-color="#b4a6ca"/></linearGradient>
<radialGradient id="pgw" cx=".5" cy=".5" r=".7"><stop offset="0" stop-color="#ffffff"/><stop offset="1" stop-color="#d8d2e2"/></radialGradient></defs>
<path d="M43.5 40 C43 32 42.6 24 42.8 17.5 C41 15 40.2 12 41 8.5 C41.6 6 42.8 4.6 43.6 4.2 L44.2 2.2 L45.4 3.6 L46.2 1.8 L47.2 3.4 L48.6 2.4 L49 4.2 C51.5 5.5 53.5 8.5 55 13 C59 18 63 24 66.5 31 C68.5 35 69.8 38 70.5 40Z" fill="url(#pg1)"/>
<path d="M43.6 40 C43.2 33 42.9 25 43.4 18 C45 17.2 47.4 16.8 49.6 17.2 C48.6 21 47.2 24 46.8 28 C46.5 32 47.5 36 49 40Z" fill="url(#pgw)"/>
<path d="M46.8 27 C47.5 23 49.5 20.5 51.5 21.5 C54 24 55.5 33 57 40 L49 40 C47.4 36 46.4 31 46.8 27Z" fill="#9484ac"/>
<path d="M40.8 10.6 L35.2 13.8 L36 16 L41.6 13.8Z" fill="#d6663a"/>
<path d="M26.6 22.6 C29 20.5 31 19.2 33.5 17 C35.5 15 37.5 13.2 40 12 L40.8 14.6 C38 15.6 36.5 17.2 34.4 18.8 C32 20.4 30 21.4 28 23.4Z" fill="#f0682a"/>
<path d="M30 19.5 L32.5 18 M35 16.5 L37.5 14.5" stroke="#ffb070" stroke-width="1" fill="none"/>
<path d="M40.6 9.6 C43.5 8.6 46.5 8.8 48 10 C49 11.5 49.6 13.4 49.4 15.2" stroke="#e8c85a" stroke-width="1.3" fill="none"/>
<path d="M46.5 10.5 L48.5 14.8" stroke="#e8c85a" stroke-width=".9" fill="none"/>
<circle cx="43" cy="12.2" r="1.3" fill="#e07038"/><circle cx="43" cy="12.2" r=".55" fill="#3a1a10"/>
<path d="M12.6 40 C14.5 35 16.5 30.5 18.6 27 C19 24 20 21.4 22.4 19.8 C24.6 18.6 27.2 19 28.4 20.8 C29 22.4 28.8 24 28.4 25.4 C29.6 30 30.4 35 30.4 40Z" fill="url(#pg2)"/>
<path d="M19.6 40 C20.4 35.5 21.6 31.5 23.6 28.6 C25.4 28.2 27.2 27.4 28.4 26 C29.6 30.5 30.2 35.5 30.2 40Z" fill="url(#pgw)"/>
<path d="M23.6 20.6 L11 24.6 M23.2 21.4 L13.4 28.6 M22.4 21.8 L16 30 M23.8 20 L15.4 21.2" stroke="#e6c45a" stroke-width=".9" fill="none" opacity=".9"/>
<path d="M27.6 21.2 L30.4 19.2 L31 20.8 L28.4 23Z" fill="#e8702a"/>
<circle cx="25.6" cy="21.4" r="1.2" fill="#e07038"/><circle cx="25.6" cy="21.4" r=".5" fill="#20100a"/>
</svg>
<svg style="left:352px;top:12px" width="17" height="15" viewBox="0 0 17 15" fill="none" stroke="#fff" stroke-width="1.5"><path d="M0.75 0V15M11.25 0V15M0.75 3.75H11.25M0.75 11.25H11.25"/><path d="M14.5 0V15" stroke-width="1.2"/><rect x="13" y="4" width="3" height="3" fill="#fff" stroke="none"/></svg>
<svg style="left:399px;top:8px" width="24" height="24" viewBox="0 0 24 24"><defs><linearGradient id="mlr" x1="0" y1="0" x2="0" y2="1"><stop offset="0" stop-color="#1272cc"/><stop offset="1" stop-color="#0a56a8"/></linearGradient><linearGradient id="mlb" x1="0" y1="0" x2="0" y2="1"><stop offset="0" stop-color="#2cb2f0"/><stop offset="1" stop-color="#1488dc"/></linearGradient></defs><path d="M0 7.6L12 0.4L24 7.6Z" fill="url(#mlr)"/><path d="M0 7.6H24V23H0Z" fill="url(#mlb)"/><path d="M12 15L22 8L24 7.6V22.6Z" fill="#3cc8f6"/><path d="M2.4 8H21.6L12 15Z" fill="#f6f6f6"/></svg>
<svg style="left:448px;top:8px" width="24" height="24" viewBox="-12 -12 24 24"><path id="chs" d="M10.39 -6A12 12 0 0 0 -10.39 -6L-5.2 3A6 6 0 0 1 0 -6Z" fill="#e94335"/><path d="M10.39 -6A12 12 0 0 0 -10.39 -6L-5.2 3A6 6 0 0 1 0 -6Z" fill="#2ba24c" transform="rotate(-120)"/><path d="M10.39 -6A12 12 0 0 0 -10.39 -6L-5.2 3A6 6 0 0 1 0 -6Z" fill="#fbc116" transform="rotate(120)"/><circle r="6.1" fill="#fff"/><circle r="4.7" fill="#3b7ded"/></svg>
<svg style="left:497px;top:8px" width="24" height="24" viewBox="0 0 24 24"><circle cx="12" cy="12" r="10.6" fill="none" stroke="#fff" stroke-width="1.4"/><text x="12" y="14.4" text-anchor="middle" font-family="Liberation Sans,sans-serif" font-weight="bold" font-size="6.8" fill="#fff" letter-spacing="0">DELL</text></svg>
<svg style="left:547px;top:10px" width="22" height="19" viewBox="0 0 22 19"><path d="M0 1.2Q0 0.4 0.8 0.4H8.6L10.2 2.4H21.2Q22 2.4 22 3.2V16H0Z" fill="#e8a417"/><path d="M0 3.6H8.8L10 2.6H22V16Q22 16.8 21.2 16.8H0.8Q0 16.8 0 16Z" fill="#fdd868"/><path d="M4.2 18.6V11.6Q4.2 10.6 5.2 10.6H17Q18 10.6 18 11.6V18.6H14.4V14.2H7.8V18.6Z" fill="#2d94e6"/></svg>
<svg style="left:595px;top:8px" width="24" height="24" viewBox="0 0 24 24"><path d="M0.2 15.4L17.5 0V7.2L3.2 20Z" fill="#7b55c2"/><path d="M0.2 8.6L0.2 15.4L2.6 13.4V10.6Z" fill="#6e4ab6"/><path d="M3.2 4L17.5 16.8V24L0.2 8.6Z" fill="#a77fe4"/><path d="M17.5 0L24 2.7V21.3L17.5 24Z" fill="#d2a8f8"/></svg>
<div class="abs" style="left:632px;top:0;width:48px;height:40px;background:#62465f"></div>
<div class="abs" style="left:632px;top:38px;width:48px;height:2px;background:#e66fb8"></div>
<svg style="left:644px;top:8px" width="24" height="24" viewBox="0 0 24 24"><defs><linearGradient id="dvg2" x1="0" y1="0" x2="0" y2="1"><stop offset="0" stop-color="#b4b4e4"/><stop offset=".3" stop-color="#5060b8"/><stop offset=".5" stop-color="#1848d0"/><stop offset=".72" stop-color="#0a6cf0"/><stop offset="1" stop-color="#1074ee"/></linearGradient></defs><rect x="0" y="0" width="24" height="24" rx="1.5" fill="#0a0a30"/><rect x="1" y="1" width="22" height="22" fill="url(#dvg2)"/><text x="12" y="11.6" text-anchor="middle" font-family="Liberation Sans,sans-serif" font-weight="bold" font-size="9.8" fill="#fff" letter-spacing="-0.3">DEV</text><text x="12.2" y="21.6" text-anchor="middle" font-family="Liberation Sans,sans-serif" font-weight="bold" font-size="11.6" fill="#0a2c98" letter-spacing="-0.1">C++</text></svg>
<svg style="left:950px;top:9px" width="26" height="22" viewBox="0 0 26 22"><defs><linearGradient id="sun" x1="0.15" y1="0.1" x2="0.85" y2="0.9"><stop offset="0" stop-color="#f8c21c"/><stop offset="1" stop-color="#ef5a1f"/></linearGradient></defs><circle cx="10.7" cy="11" r="10" fill="url(#sun)"/><circle cx="17.2" cy="5.3" r="5.6" fill="#d6332b"/><text x="17.2" y="8.4" text-anchor="middle" font-family="Liberation Sans,sans-serif" font-size="8.6" fill="#fff">1</text></svg>
<span class="tx" style="left:980.53px;top:13.3px;font-size:14px;letter-spacing:-0.347px;color:#fff;">26°C</span>
<span class="tx" style="left:1018.63px;top:13.3px;font-size:14px;letter-spacing:-0.108px;color:#fff;">Soleado</span>
<svg style="left:1093px;top:16px" width="12" height="8" viewBox="0 0 12 8"><path d="M0.5 7L6 1.2L11.5 7" fill="none" stroke="#fff" stroke-width="1.3"/></svg>
<svg style="left:1117px;top:14px" width="14" height="14" viewBox="0 0 14 14" fill="none" stroke="#9a8e98" stroke-width="1.1"><path d="M1.2 12.8A11.6 11.6 0 0 1 12.8 1.2"/><path d="M4.6 12.8A8.2 8.2 0 0 1 12.8 4.6"/><path d="M8 12.8A4.8 4.8 0 0 1 12.8 8"/><circle cx="11.6" cy="11.8" r="1.5" fill="#fff" stroke="none"/></svg>
<svg style="left:1141px;top:11px" width="14" height="18" viewBox="0 0 14 18" fill="none" stroke="#fff" stroke-width="1.1"><rect x="0.8" y="5.2" width="8" height="7.6" rx="1.4"/><path d="M9 8L12.2 6V12L9 10"/><path d="M2.2 2.6Q6 0 10.4 2.6" stroke="#bdb3bb"/><path d="M2.2 15.4Q6 18 10.4 15.4" stroke="#bdb3bb"/></svg>
<svg style="left:1162px;top:14px" width="18" height="13" viewBox="0 0 18 13" fill="none" stroke="#fff" stroke-width="1.1"><path d="M6.4 2.3H16.4V11.3H3.3V6.6"/><path d="M17 5v3.6" stroke-width="1.3"/><rect x="6" y="4" width="5" height="5.8" fill="#fff" stroke="none"/><path d="M2 0v2.6M4.6 0v2.6"/><path d="M0.9 2.6H5.7V4.6Q5.7 6.6 3.3 6.6Q0.9 6.6 0.9 4.6Z" fill="#fff"/></svg>
<svg style="left:1186px;top:14px" width="18" height="14" viewBox="0 0 18 14" fill="none" stroke="#fff" stroke-width="1.1"><path d="M1 4.4H3.2L6.6 1V12.6L3.2 9.2H1Z"/><path d="M8.8 4.6Q10.2 6.8 8.8 9"/><path d="M11 2.6Q13.6 6.8 11 11" stroke="#e6e0e4"/><path d="M13.6 0.6Q17.4 6.8 13.6 13" stroke="#8d7f8a"/></svg>
<span class="tx" style="left:1214.91px;top:13.1px;font-size:12.5px;letter-spacing:-0.300px;transform:scaleX(0.7772);transform-origin:0 0;color:#fff;">ESP</span>
<span class="tx" style="left:1250.44px;top:4px;font-size:12px;letter-spacing:-0.373px;color:#fff;">10:54 a. m.</span>
<span class="tx" style="left:1248.54px;top:22px;font-size:12px;letter-spacing:-0.105px;color:#fff;">25/04/2024</span>
<svg style="left:1325px;top:12px" width="26" height="26" viewBox="0 0 26 26"><path d="M0.3 0.3H16.3V12.3H6.5L3.3 15.6V12.3H0.3Z" fill="#fff"/><path d="M3 3.4H13.6M3 6.2H13.6M3 9H13.6" stroke="#3b1737" stroke-width="1.1"/><circle cx="15.4" cy="15.6" r="7.6" fill="#262226" stroke="#6b5f69" stroke-width="1.2"/><text x="15.4" y="19.6" text-anchor="middle" font-family="Liberation Sans,sans-serif" font-weight="bold" font-size="11" fill="#fff">4</text></svg>
<div class="abs" style="left:1361px;top:0;width:1px;height:40px;background:#8a7a88"></div>
</div>
</body>
</html>
